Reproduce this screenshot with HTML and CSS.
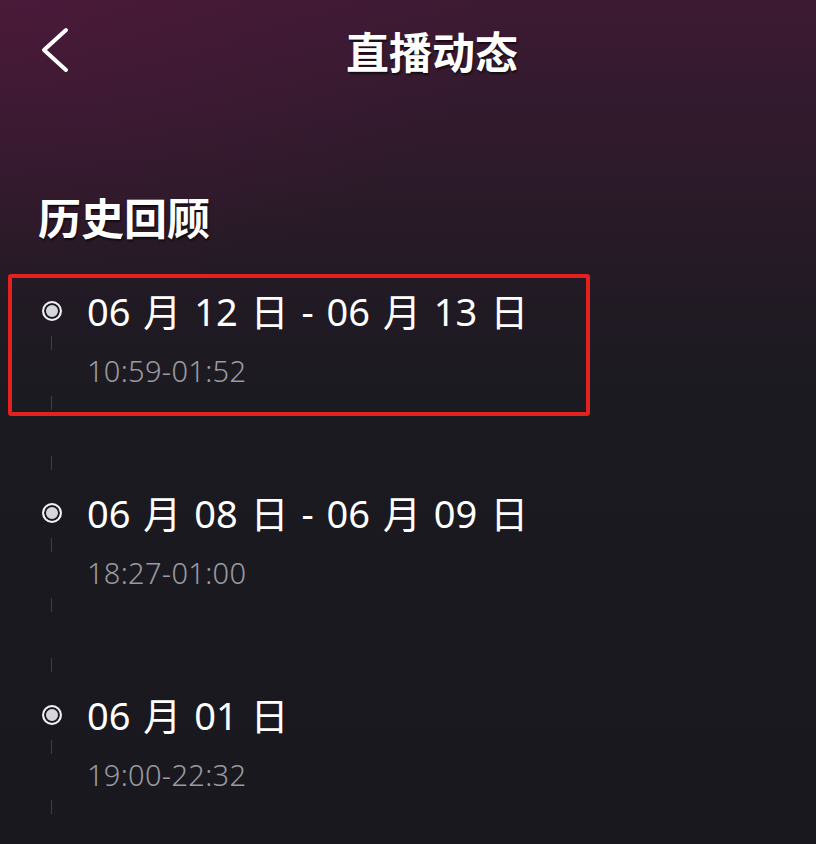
FILE: index.html
```html
<!DOCTYPE html>
<html lang="zh-CN">
<head>
<meta charset="utf-8">
<title>直播动态</title>
<link rel="stylesheet" href="styles.css">
</head>
<body>
<div class="page">
  <header class="topbar">
    <div class="back">
      <svg width="30" height="46" viewBox="0 0 30 46" fill="none" stroke="#ffffff" stroke-width="4" stroke-linecap="round" stroke-linejoin="round">
        <path d="M26 3 L4 23 L26 43"/>
      </svg>
    </div>
    <h1 class="title">直播动态</h1>
    <div class="spacer"></div>
  </header>

  <h2 class="section-title">历史回顾</h2>

  <ul class="timeline">
    <li class="item marked">
      <span class="dot"></span>
      <div class="text">
        <div class="date">06 月 12 日 - 06 月 13 日</div>
        <div class="time">10:59-01:52</div>
      </div>
    </li>
    <li class="item">
      <span class="dot"></span>
      <div class="text">
        <div class="date">06 月 08 日 - 06 月 09 日</div>
        <div class="time">18:27-01:00</div>
      </div>
    </li>
    <li class="item">
      <span class="dot"></span>
      <div class="text">
        <div class="date">06 月 01 日</div>
        <div class="time">19:00-22:32</div>
      </div>
    </li>
  </ul>
</div>
</body>
</html>
```

FILE: styles.css
```css
html, body {
  margin: 0;
  padding: 0;
  height: 100%;
}

body {
  background: #18181e;
  font-family: "Noto Sans", "Noto Sans CJK SC", sans-serif;
  color: #ffffff;
  overflow: hidden;
}

.page {
  width: 816px;
  height: 844px;
  overflow: hidden;
  background:
    radial-gradient(ellipse 500px 300px at 0 0, rgba(90, 25, 65, 0.45), rgba(90, 25, 65, 0) 100%),
    linear-gradient(180deg, #3d1a33 0%, #331a2e 12%, #2a1a28 24%, #211a24 36%, #1b1a21 48%, #18181e 100%);
}

.topbar {
  display: grid;
  grid-template-columns: 144px 1fr 96px;
  align-items: center;
  height: 100px;
}

.back {
  padding-left: 40px;
  display: flex;
  align-items: center;
  height: 100px;
}

.title {
  margin: 0;
  text-align: center;
  font-family: "Noto Sans CJK SC", sans-serif;
  font-size: 43px;
  font-weight: 700;
  line-height: 100px;
  text-shadow: 1px 2px 2px rgba(0, 0, 0, 0.6);
}

.section-title {
  margin: 94px 0 0 38px;
  font-family: "Noto Sans CJK SC", sans-serif;
  font-size: 43px;
  font-weight: 700;
  line-height: 44px;
  text-shadow: 1px 2px 2px rgba(0, 0, 0, 0.6);
}

.timeline {
  list-style: none;
  margin: 36px 0 0 8px;
  padding: 0;
  display: flex;
  flex-direction: column;
  gap: 60px;
}

.item {
  position: relative;
  width: 574px;
  height: 134px;
  border: 4px solid transparent;
  border-radius: 3px;
  display: flex;
  align-items: flex-start;
}

.item.marked {
  border-color: #e3211f;
}

.item::after {
  content: "";
  position: absolute;
  left: 39px;
  top: 58px;
  width: 1px;
  height: 150px;
  background: repeating-linear-gradient(180deg, rgba(255,255,255,0.16) 0 14px, rgba(255,255,255,0) 14px 60px);
}

.item:last-child::after {
  height: 100px;
}

.dot {
  flex: none;
  margin: 23px 0 0 30px;
  width: 20px;
  height: 20px;
  border: 2px solid #f2f2f2;
  border-radius: 50%;
  box-sizing: border-box;
  background: #d6d6dc;
  box-shadow: inset 0 0 0 2px #1c1a22;
}

.text {
  margin-left: 25px;
  padding-top: 11px;
}

.date {
  font-size: 38px;
  line-height: 44px;
  font-weight: 400;
  color: #ffffff;
  white-space: nowrap;
  word-spacing: 3px;
}

.time {
  margin-top: 21px;
  font-size: 29px;
  line-height: 34px;
  font-weight: 300;
  color: #9a9aa0;
  letter-spacing: 0.3px;
}
```
